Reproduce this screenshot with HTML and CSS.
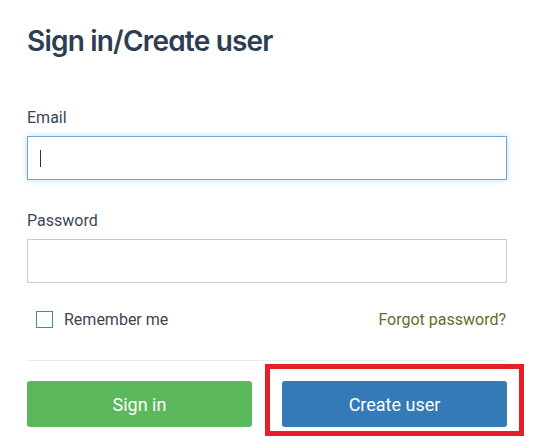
FILE: index.html
```html
<!DOCTYPE html>
<html>
<head>
<meta charset="utf-8">
<link rel="stylesheet" href="styles.css">
</head>
<body>
<main class="page">
  <h1 class="title">Sign in/Create user</h1>
  <form class="form">
    <div class="field">
      <label class="label" for="email">Email</label>
      <div class="input input-focus"><span class="caret"></span></div>
    </div>
    <div class="field">
      <label class="label" for="pw">Password</label>
      <div class="input"></div>
    </div>
    <div class="options">
      <label class="remember"><span class="checkbox"></span>Remember me</label>
      <a class="forgot">Forgot password?</a>
    </div>
    <div class="actions">
      <button type="button" class="btn btn-green">Sign in</button>
      <div class="highlight">
        <button type="button" class="btn btn-blue">Create user</button>
      </div>
    </div>
  </form>
</main>
</body>
</html>
```

FILE: styles.css
```css
html, body { margin: 0; padding: 0; background: #fff; }
body { font-family: Roboto, "Liberation Sans", sans-serif; color: #3b4656; }
.page { width: 480px; padding: 21px 0 0 27px; }
.title {
  margin: 0;
  font-family: Inter, Lato, "Liberation Sans", sans-serif;
  font-feature-settings: "cv11" 1;
  font-weight: 600;
  font-size: 28px;
  line-height: 40px;
  color: #2e3d50;
  letter-spacing: -0.8px;
}
.form { display: flex; flex-direction: column; margin-top: 47px; }
.field { display: flex; flex-direction: column; }
.field + .field { margin-top: 31px; }
.label { font-size: 16px; line-height: 20px; color: #3b4656; margin-bottom: 8px; }
.input {
  box-sizing: border-box;
  height: 44px;
  border: 1px solid #cccccc;
  background: #fff;
  display: flex;
  align-items: center;
  padding-left: 12px;
}
.input-focus {
  border-color: #6aa8da;
  box-shadow: 0 0 6px rgba(102, 175, 233, 0.45);
}
.caret { width: 1px; height: 17px; background: #333; }
.options {
  display: flex;
  justify-content: space-between;
  align-items: center;
  height: 36px;
  margin-top: 18px;
}
.remember { display: flex; align-items: center; padding-left: 9px; font-size: 16px; color: #3b4656; }
.checkbox {
  box-sizing: border-box;
  width: 17px; height: 17px;
  border: 1.5px solid #3d8fa6;
  margin-right: 11px;
}
.forgot { font-size: 16px; color: #6b6a2a; padding-right: 1px; }
.actions {
  display: flex;
  justify-content: space-between;
  align-items: flex-start;
  border-top: 1px solid #ebebeb;
  margin-top: 23px;
  padding-top: 20px;
}
.btn {
  box-sizing: border-box;
  width: 225px; height: 46px;
  border: none; border-radius: 3px;
  color: #fff;
  font-family: Roboto, "Liberation Sans", sans-serif;
  font-size: 18px;
  display: block;
}
.btn-green { background: #5cb85c; }
.btn-blue { background: #337ab7; }
.highlight {
  border: 5px solid #e3202a;
  padding: 12px 12px 4px 12px;
  margin: -17px -17px 0 0;
}
```
